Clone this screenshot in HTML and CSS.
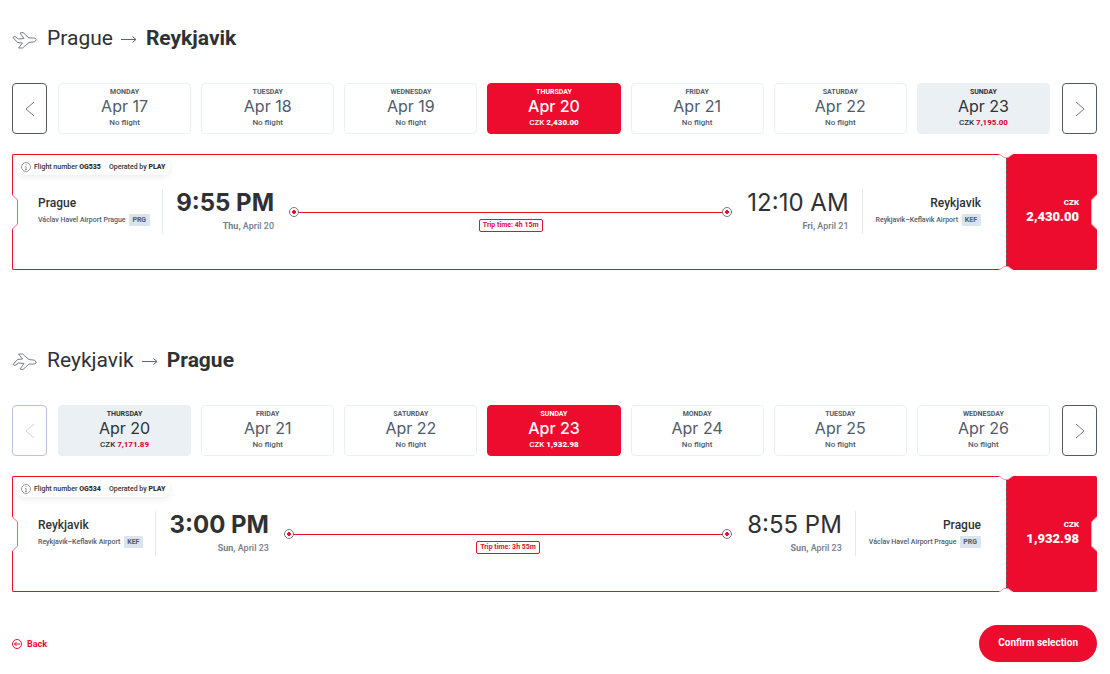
FILE: index.html
```html
<!DOCTYPE html>
<html lang="en">
<head>
    <meta charset="UTF-8">
    <meta name="viewport" content="width=device-width, initial-scale=1">
    <title>Select flights</title>
    <link rel="stylesheet" href="styles.css">
</head>
<body>
<!-- shared shapes -->
<svg class="defs" aria-hidden="true">
    <symbol id="plane" viewBox="0 0 25 18">
        <path d="M1 6.500 3 5.500 6.500 8 12 7.500 8 2 11 1.500 17 7 21.500 7C23.500 7 24.500 8 24 9C23.500 10.500 22.500 11 21 11L17 11.500 10.500 17 6.500 17 10.500 12 5.500 11.500Z"/>
    </symbol>
    <symbol id="arrow" viewBox="0 0 16 10">
        <path d="M0 5.500h15M11.500 2.500l3.500 3-3.500 3"/>
    </symbol>
    <symbol id="prev" viewBox="0 0 10 16">
        <path d="M9 1 1 8l8 7"/>
    </symbol>
    <symbol id="next" viewBox="0 0 10 16">
        <path d="M1 1l8 7-8 7"/>
    </symbol>
    <symbol id="info" viewBox="0 0 10 10">
        <circle cx="5" cy="5" r="4.500"/>
        <path d="M4 4.500h1v3M4 7.500h2M4.500 2.500h1"/>
    </symbol>
    <symbol id="back" viewBox="0 0 10 10">
        <circle cx="5" cy="5" r="4.500"/>
        <path d="M8 5H2.500M4.500 3l-2 2 2 2"/>
    </symbol>
    <symbol id="notch-left" viewBox="0 0 6 36">
        <path d="M0 .5 5.500 6v24L0 35.500"/>
    </symbol>
    <symbol id="notch-right" viewBox="0 0 6 36">
        <path d="M6 .5.500 6v24L6 35.500"/>
    </symbol>
    <symbol id="notch-top" viewBox="0 0 14 5">
        <path d="M0 0 5 3.500h4L14 0"/>
    </symbol>
    <symbol id="notch-bottom" viewBox="0 0 14 5">
        <path d="M0 5 5 1.500h4L14 5"/>
    </symbol>
</svg>

<main class="page">
    <section class="trip">
        <h2 class="route">
            <svg class="plane"><use href="#plane"/></svg>
            <span>Prague</span>
            <svg class="arrow"><use href="#arrow"/></svg>
            <strong>Reykjavik</strong>
        </h2>

        <div class="dates">
            <button class="step" type="button" aria-label="Previous dates"><svg><use href="#prev"/></svg></button>
            <div class="days">
                <button class="day" type="button"><b>Monday</b><span class="date">Apr 17</span><span>No flight</span></button>
                <button class="day" type="button"><b>Tuesday</b><span class="date">Apr 18</span><span>No flight</span></button>
                <button class="day" type="button"><b>Wednesday</b><span class="date">Apr 19</span><span>No flight</span></button>
                <button class="day selected" type="button"><b>Thursday</b><span class="date">Apr 20</span><span>CZK <em>2,430.00</em></span></button>
                <button class="day" type="button"><b>Friday</b><span class="date">Apr 21</span><span>No flight</span></button>
                <button class="day" type="button"><b>Saturday</b><span class="date">Apr 22</span><span>No flight</span></button>
                <button class="day available" type="button"><b>Sunday</b><span class="date">Apr 23</span><span>CZK <em>7,195.00</em></span></button>
            </div>
            <button class="step" type="button" aria-label="Next dates"><svg><use href="#next"/></svg></button>
        </div>

        <article class="ticket">
            <div class="flight">
                <p class="info">
                    <svg><use href="#info"/></svg>
                    <span>Flight number <b>OG535</b></span>
                    <span>Operated by <b>PLAY</b></span>
                </p>
                <div class="leg">
                    <div class="station from">
                        <h3>Prague</h3>
                        <p>Václav Havel Airport Prague <span class="code">PRG</span></p>
                    </div>
                    <div class="time">
                        <strong>9:55 PM</strong>
                        <p><b>Thu,</b> April 20</p>
                    </div>
                    <div class="timeline">
                        <div class="line"><i></i><i></i></div>
                        <span class="duration">Trip time: 4h 15m</span>
                    </div>
                    <div class="time">
                        <span>12:10 AM</span>
                        <p><b>Fri,</b> April 21</p>
                    </div>
                    <div class="station to">
                        <h3>Reykjavik</h3>
                        <p>Reykjavik–Keflavik Airport <span class="code">KEF</span></p>
                    </div>
                </div>
            </div>
            <div class="price"><span>CZK</span><strong>2,430.00</strong></div>
            <svg class="notch left"><use href="#notch-left"/></svg>
            <svg class="notch right"><use href="#notch-right"/></svg>
            <svg class="notch top"><use href="#notch-top"/></svg>
            <svg class="notch bottom"><use href="#notch-bottom"/></svg>
        </article>
    </section>

    <section class="trip">
        <h2 class="route">
            <svg class="plane return"><use href="#plane"/></svg>
            <span>Reykjavik</span>
            <svg class="arrow"><use href="#arrow"/></svg>
            <strong>Prague</strong>
        </h2>

        <div class="dates">
            <button class="step" type="button" aria-label="Previous dates" disabled><svg><use href="#prev"/></svg></button>
            <div class="days">
                <button class="day available" type="button"><b>Thursday</b><span class="date">Apr 20</span><span>CZK <em>7,171.89</em></span></button>
                <button class="day" type="button"><b>Friday</b><span class="date">Apr 21</span><span>No flight</span></button>
                <button class="day" type="button"><b>Saturday</b><span class="date">Apr 22</span><span>No flight</span></button>
                <button class="day selected" type="button"><b>Sunday</b><span class="date">Apr 23</span><span>CZK <em>1,932.98</em></span></button>
                <button class="day" type="button"><b>Monday</b><span class="date">Apr 24</span><span>No flight</span></button>
                <button class="day" type="button"><b>Tuesday</b><span class="date">Apr 25</span><span>No flight</span></button>
                <button class="day" type="button"><b>Wednesday</b><span class="date">Apr 26</span><span>No flight</span></button>
            </div>
            <button class="step" type="button" aria-label="Next dates"><svg><use href="#next"/></svg></button>
        </div>

        <article class="ticket">
            <div class="flight">
                <p class="info">
                    <svg><use href="#info"/></svg>
                    <span>Flight number <b>OG534</b></span>
                    <span>Operated by <b>PLAY</b></span>
                </p>
                <div class="leg">
                    <div class="station from">
                        <h3>Reykjavik</h3>
                        <p>Reykjavik–Keflavik Airport <span class="code">KEF</span></p>
                    </div>
                    <div class="time">
                        <strong>3:00 PM</strong>
                        <p><b>Sun,</b> April 23</p>
                    </div>
                    <div class="timeline">
                        <div class="line"><i></i><i></i></div>
                        <span class="duration">Trip time: 3h 55m</span>
                    </div>
                    <div class="time">
                        <span>8:55 PM</span>
                        <p><b>Sun,</b> April 23</p>
                    </div>
                    <div class="station to">
                        <h3>Prague</h3>
                        <p>Václav Havel Airport Prague <span class="code">PRG</span></p>
                    </div>
                </div>
            </div>
            <div class="price"><span>CZK</span><strong>1,932.98</strong></div>
            <svg class="notch left"><use href="#notch-left"/></svg>
            <svg class="notch right"><use href="#notch-right"/></svg>
            <svg class="notch top"><use href="#notch-top"/></svg>
            <svg class="notch bottom"><use href="#notch-bottom"/></svg>
        </article>
    </section>

    <footer class="actions">
        <a class="back" href="#"><svg><use href="#back"/></svg>Back</a>
        <button class="confirm" type="button">Confirm selection</button>
    </footer>
</main>
</body>
</html>
```
FILE: styles.css
```css
* {
    box-sizing: border-box;
    margin: 0;
    padding: 0;
}

body {
    background: #fff;
    color: #2f3133;
    font-family: Roboto, "Liberation Sans", sans-serif;
    font-size: 8px;
    line-height: 12px;
}

button {
    font: inherit;
    color: inherit;
    cursor: pointer;
}

svg {
    display: block;
    flex: none;
}

.route svg,
.step svg,
.info svg,
.back svg {
    fill: none;
    stroke: currentColor;
}

.defs {
    position: absolute;
    width: 0;
    height: 0;
}

.page {
    padding: 25px 13px 12px 12px;
}

.trip + .trip {
    margin-top: 77px;
}

/* route heading */
.route {
    display: flex;
    align-items: center;
    height: 26px;
    margin-bottom: 32px;
    font-size: 21px;
    line-height: 26px;
    font-weight: 400;
}

.plane {
    width: 25px;
    height: 18px;
    margin: 3px 10px 0 0;
    color: #75808a;
}

.plane.return {
    transform: scaleY(-1);
}

.arrow {
    width: 16px;
    height: 10px;
    margin: 2px 9px 0 8px;
    color: #5b6670;
}

/* date picker */
.dates {
    display: grid;
    grid-template-columns: 35px 1fr 35px;
    gap: 11px;
    height: 51px;
    margin-bottom: 20px;
}

.days {
    display: grid;
    grid-template-columns: repeat(7, 1fr);
    gap: 10px;
    padding-right: 1px;
}

.step {
    display: flex;
    align-items: center;
    justify-content: center;
    background: #fff;
    border: 1px solid #505b68;
    border-radius: 4px;
    color: #777;
}

.step svg {
    width: 10px;
    height: 16px;
}

.step:disabled {
    border-color: #b6c3dc;
    color: #ccd0d6;
}

.day {
    display: flex;
    flex-direction: column;
    align-items: center;
    padding-top: 4px;
    background: #fff;
    border: 1px solid #ebf0f5;
    border-radius: 4px;
    color: #505b68;
    font-weight: 500;
}

.day b {
    font-size: 7px;
    line-height: 8px;
    text-transform: uppercase;
}

.date {
    font-family: Inter, sans-serif;
    font-size: 16px;
    line-height: 21px;
    font-weight: 400;
}

.day em {
    color: #d4002a;
    font-style: normal;
    font-weight: 700;
}

.day.available {
    background: #ebf0f5;
    color: #2f3133;
}

.day.selected {
    background: #ed0c2e;
    border-color: #ed0c2e;
    color: #fff;
}

.day.selected .date {
    font-weight: 500;
}

.day.selected em {
    color: #fff;
    font-weight: 900;
}

/* ticket */
.ticket {
    position: relative;
    display: grid;
    grid-template-columns: 1fr 91px;
    height: 116px;
}

.flight {
    padding: 4px 25px 0 4px;
    border: 1px solid #ed0c2e;
    border-right: 0;
    border-radius: 2px 0 0 2px;
}

.info {
    display: flex;
    align-items: center;
    gap: 8px;
    width: max-content;
    height: 16px;
    margin-bottom: 14px;
    padding: 0 5px 0 4px;
    border-radius: 8px;
    box-shadow: 0 2px 6px rgba(0, 0, 0, .08);
    font-size: 7px;
    font-weight: 500;
}

.info b {
    font-weight: 900;
}

.info svg {
    width: 10px;
    height: 10px;
    color: #999;
    margin-right: -5px;
}

.leg {
    display: flex;
    height: 45px;
    padding-left: 21px;
}

.station {
    padding-top: 6px;
    white-space: nowrap;
}

.station h3 {
    font-size: 12px;
    line-height: 16px;
    font-weight: 500;
}

.station p {
    color: #505b68;
    font-size: 7px;
    line-height: 18px;
    font-weight: 500;
}

.station.from {
    padding-right: 12px;
    border-right: 1px solid #e4eaf1;
}

.station.to {
    padding-left: 13px;
    border-left: 1px solid #e4eaf1;
    text-align: right;
}

.code {
    display: inline-block;
    margin-left: 2px;
    padding: 0 4px 0 3px;
    background: #dbe3ef;
    border-radius: 1px;
    line-height: 12px;
    font-weight: 700;
}

.time {
    padding: 0 13px;
    font-family: Inter, sans-serif;
    font-size: 24px;
    line-height: 28px;
    text-align: right;
    white-space: nowrap;
}

.time p {
    color: #75808a;
    font-family: Roboto, sans-serif;
    font-size: 9px;
    line-height: 18px;
    font-weight: 500;
}

.timeline {
    display: flex;
    flex: 1;
    flex-direction: column;
    align-items: center;
    padding: 18px 2px 0;
}

.line {
    display: flex;
    align-items: center;
    justify-content: space-between;
    width: 100%;
    height: 10px;
    background: linear-gradient(#ed0c2e, #ed0c2e) center / 100% 1px no-repeat;
}

.line i {
    width: 10px;
    height: 10px;
    border: 1px solid #777;
    border-radius: 50%;
    background: radial-gradient(#ed0c2e 2px, #fff 2px);
}

.duration {
    margin-top: 2px;
    padding: 0 3px;
    border: 1px solid #ed0c2e;
    border-radius: 2px;
    color: #ed0c2e;
    font-size: 7px;
    line-height: 11px;
    font-weight: 700;
}

.price {
    display: flex;
    flex-direction: column;
    justify-content: center;
    padding: 0 18px 3px 0;
    background: #ed0c2e;
    border-left: 1px dashed #75606f;
    border-radius: 0 2px 2px 0;
    color: #fff;
    text-align: right;
    font-weight: 900;
}

.price strong {
    font-size: 13px;
    line-height: 16px;
    font-weight: 900;
}

/* cut-outs on the ticket edge */
.notch {
    position: absolute;
    fill: #fff;
    stroke: #f598a6;
}

.notch.left,
.notch.right {
    top: 40px;
    width: 6px;
    height: 36px;
}

.notch.left {
    left: 0;
    stroke: #f0667c;
}

.notch.right {
    right: 0;
}

.notch.top,
.notch.bottom {
    right: 84px;
    width: 14px;
    height: 5px;
}

.notch.top {
    top: 0;
}

.notch.bottom {
    bottom: 0;
}

/* footer */
.actions {
    display: flex;
    align-items: center;
    justify-content: space-between;
    margin-top: 33px;
}

.back {
    display: flex;
    align-items: center;
    gap: 5px;
    color: #ed0c2e;
    font-size: 9px;
    font-weight: 700;
    text-decoration: none;
}

.back svg {
    width: 10px;
    height: 10px;
}

.confirm {
    padding: 0 19px 1px;
    background: #ed0c2e;
    border: 0;
    border-radius: 19px;
    color: #fff;
    font-size: 10px;
    line-height: 36px;
    font-weight: 700;
}
```
